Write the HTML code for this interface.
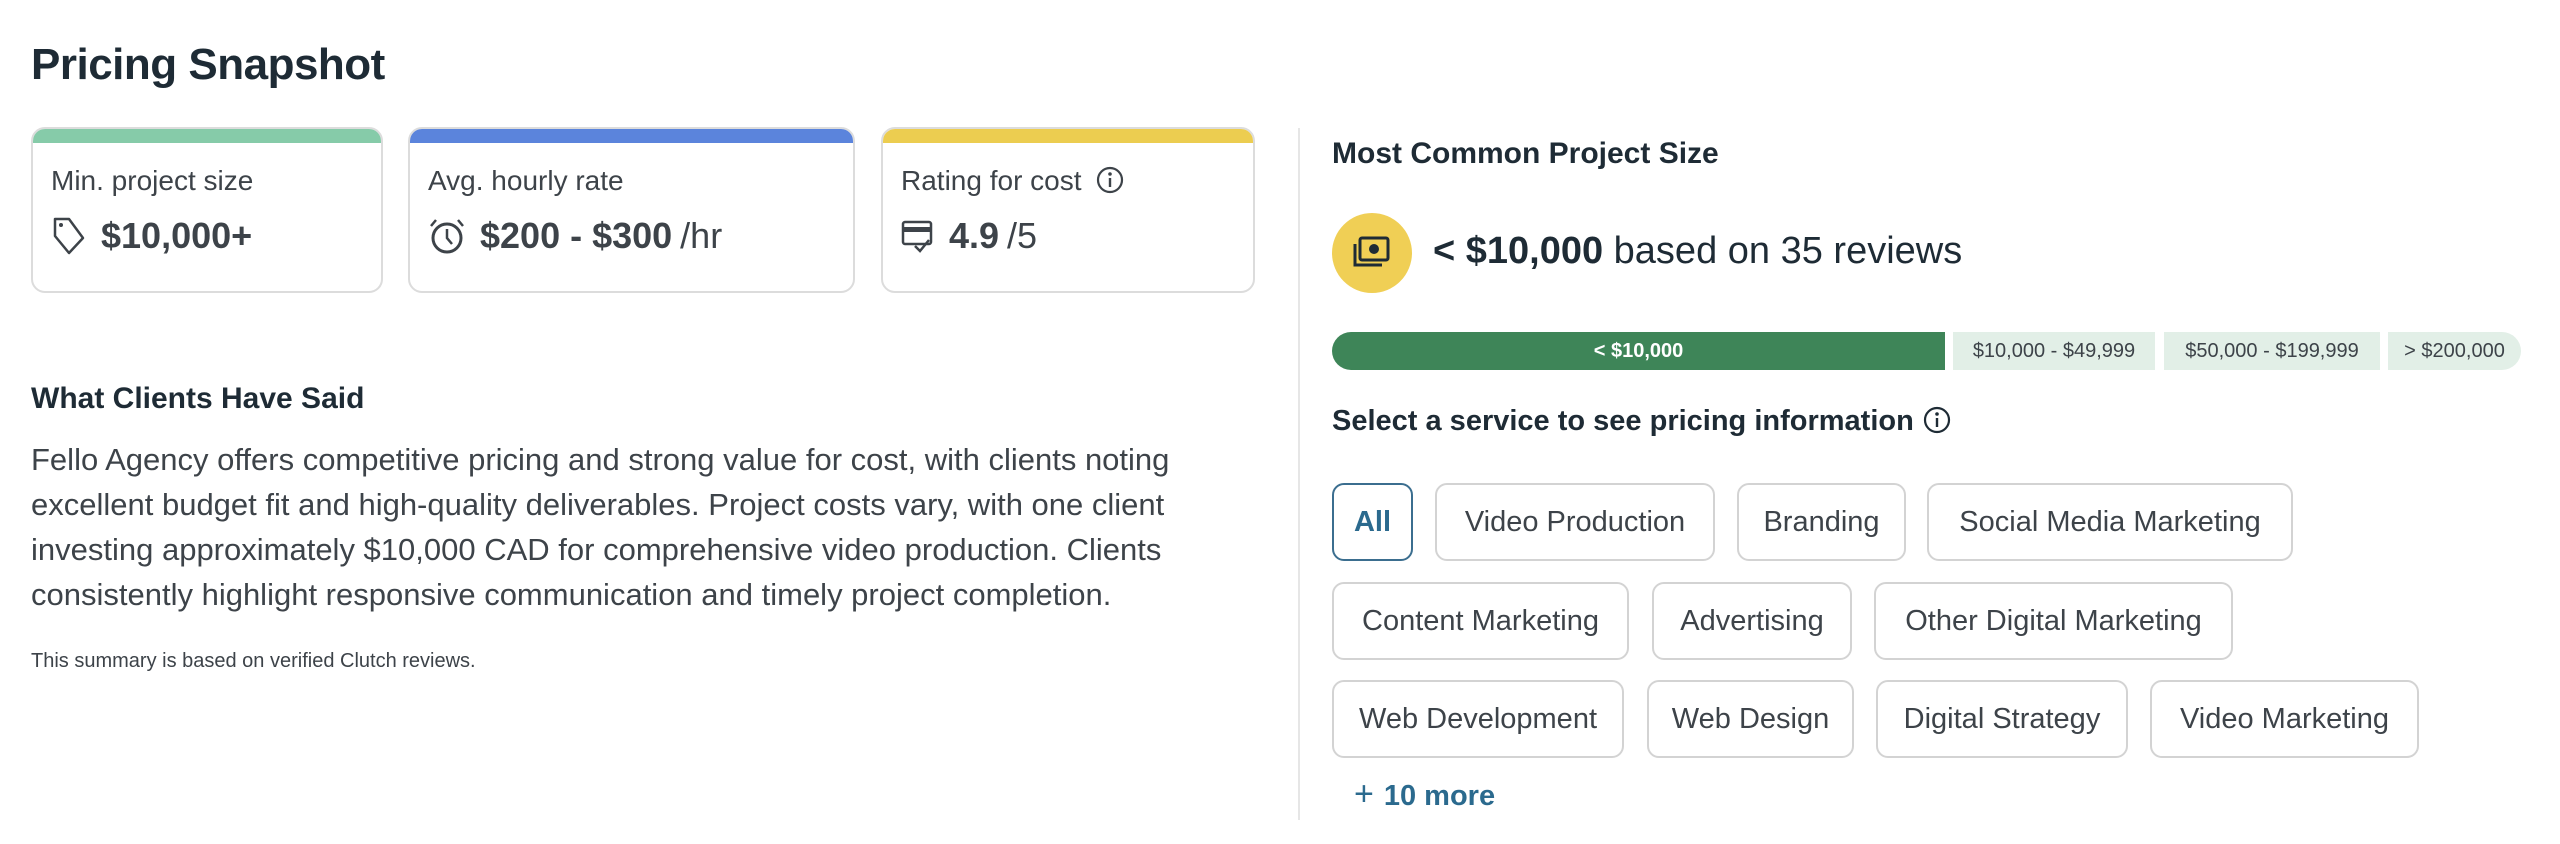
<!DOCTYPE html>
<html><head><meta charset="utf-8"><style>
*{margin:0;padding:0;box-sizing:border-box}
body{width:2560px;height:844px;background:#fff;font-family:"Liberation Sans",Arial,sans-serif;color:#1e2b35;position:relative;overflow:hidden}
.abs{position:absolute}
h1{position:absolute;left:31px;top:40px;font-size:44px;font-weight:700;color:#1e2b35;letter-spacing:-0.5px}
.card{position:absolute;top:127px;height:166px;border:2px solid #dcdcdc;border-radius:14px;overflow:hidden;background:#fff}
.card .bar{height:14px}
.card .lbl{position:absolute;left:18px;top:36px;font-size:28px;color:#3d4349}
.card .val{position:absolute;left:18px;top:86px;font-size:36px;font-weight:700;color:#3d4349;display:flex;align-items:center;gap:14px;white-space:nowrap}
.card .val span.n{font-weight:400;margin-left:-6px}
.h2{position:absolute;font-size:30px;font-weight:700;color:#1e2b35}
p.txt{position:absolute;left:31px;top:437px;width:1185px;font-size:31px;line-height:45px;color:#3d4349}
.small{position:absolute;left:31px;top:650px;font-size:20px;color:#3d4349}
.seg{position:absolute;top:332px;height:38px;font-size:20px;display:flex;align-items:center;justify-content:center;color:#3d4349;background:#e2efe7}
.chip{position:absolute;height:78px;border:2px solid #d3d3d3;border-radius:12px;font-size:29px;color:#3d4349;display:flex;align-items:center;justify-content:center;white-space:nowrap}
</style></head><body>
<h1>Pricing Snapshot</h1>

<div class="card" style="left:31px;width:352px"><div class="bar" style="background:#86cba9"></div>
<div class="lbl">Min. project size</div>
<div class="val"><svg width="36" height="40" viewBox="0 0 36 40"><path d="M4 3 L18 3 L32 22 L18 37 L4 20 Z" fill="none" stroke="#3d4349" stroke-width="2.5" stroke-linejoin="round"/><circle cx="10" cy="9" r="2" fill="#3d4349"/></svg>$10,000+</div></div>

<div class="card" style="left:408px;width:447px"><div class="bar" style="background:#5b84dc"></div>
<div class="lbl">Avg. hourly rate</div>
<div class="val"><svg width="38" height="40" viewBox="0 0 38 40"><circle cx="19" cy="22" r="14" fill="none" stroke="#3d4349" stroke-width="3"/><path d="M19 13 V22 L24 28" fill="none" stroke="#3d4349" stroke-width="2.5"/><path d="M3 10 L8 4 M35 10 L30 4" stroke="#3d4349" stroke-width="2.5"/></svg>$200 - $300 <span class="n">/hr</span></div></div>

<div class="card" style="left:881px;width:374px"><div class="bar" style="background:#eccd50"></div>
<div class="lbl">Rating for cost <svg width="30" height="30" viewBox="0 0 30 30" style="vertical-align:-5px;margin-left:6px"><circle cx="15" cy="15" r="12" fill="none" stroke="#3d4349" stroke-width="2.2"/><circle cx="15" cy="9" r="1.8" fill="#3d4349"/><path d="M15 13 V22" stroke="#3d4349" stroke-width="2.4"/></svg></div>
<div class="val"><svg width="34" height="36" viewBox="0 0 34 36"><rect x="2" y="4" width="28" height="22" rx="2" fill="none" stroke="#3d4349" stroke-width="2.5"/><rect x="2" y="9" width="28" height="5" fill="#3d4349"/><path d="M14 28 L19 33 L28 22" fill="none" stroke="#3d4349" stroke-width="2.5"/></svg>4.9 <span class="n">/5</span></div></div>

<div class="h2" style="left:31px;top:382px">What Clients Have Said</div>
<p class="txt">Fello Agency offers competitive pricing and strong value for cost, with clients noting excellent budget fit and high-quality deliverables. Project costs vary, with one client investing approximately $10,000 CAD for comprehensive video production. Clients consistently highlight responsive communication and timely project completion.</p>
<div class="small">This summary is based on verified Clutch reviews.</div>

<div class="abs" style="left:1298px;top:128px;width:2px;height:692px;background:#e6e6e6"></div>

<div class="h2" style="left:1332px;top:137px">Most Common Project Size</div>
<div class="abs" style="left:1332px;top:213px;width:80px;height:80px;border-radius:50%;background:#f0cf55"></div>
<svg class="abs" style="left:1352px;top:236px" width="40" height="34" viewBox="0 0 40 34"><rect x="8" y="2" width="28" height="22" rx="2" fill="none" stroke="#1e2b35" stroke-width="3"/><circle cx="22" cy="13" r="5" fill="#1e2b35"/><path d="M3 8 V29 H30" fill="none" stroke="#1e2b35" stroke-width="3"/></svg>
<div class="abs" style="left:1433px;top:230px;font-size:38px;color:#1e2b35"><b>&lt; $10,000</b> based on 35 reviews</div>

<div class="seg" style="left:1332px;width:613px;background:#3e8558;color:#fff;font-weight:700;border-radius:19px 0 0 19px">&lt; $10,000</div>
<div class="seg" style="left:1953px;width:202px">$10,000 - $49,999</div>
<div class="seg" style="left:2164px;width:216px">$50,000 - $199,999</div>
<div class="seg" style="left:2388px;width:133px;border-radius:0 19px 19px 0">&gt; $200,000</div>

<div class="abs" style="left:1332px;top:405px;font-size:29px;font-weight:700;color:#1e2b35">Select a service to see pricing information <svg width="30" height="30" viewBox="0 0 30 30" style="vertical-align:-5px"><circle cx="15" cy="15" r="12" fill="none" stroke="#1e2b35" stroke-width="2.2"/><circle cx="15" cy="9" r="1.8" fill="#1e2b35"/><path d="M15 13 V22" stroke="#1e2b35" stroke-width="2.4"/></svg></div>

<div class="chip" style="left:1332px;top:483px;width:81px;border-color:#3b6e8f;color:#2b6a8e;font-weight:700">All</div>
<div class="chip" style="left:1435px;top:483px;width:280px">Video Production</div>
<div class="chip" style="left:1737px;top:483px;width:169px">Branding</div>
<div class="chip" style="left:1927px;top:483px;width:366px">Social Media Marketing</div>
<div class="chip" style="left:1332px;top:582px;width:297px">Content Marketing</div>
<div class="chip" style="left:1652px;top:582px;width:200px">Advertising</div>
<div class="chip" style="left:1874px;top:582px;width:359px">Other Digital Marketing</div>
<div class="chip" style="left:1332px;top:680px;width:292px">Web Development</div>
<div class="chip" style="left:1647px;top:680px;width:207px">Web Design</div>
<div class="chip" style="left:1876px;top:680px;width:252px">Digital Strategy</div>
<div class="chip" style="left:2150px;top:680px;width:269px">Video Marketing</div>

<div class="abs" style="left:1354px;top:775px;font-size:29px;font-weight:700;color:#2b6a8e"><span style="font-weight:400;font-size:34px;margin-right:10px">+</span>10 more</div>
</body></html>
